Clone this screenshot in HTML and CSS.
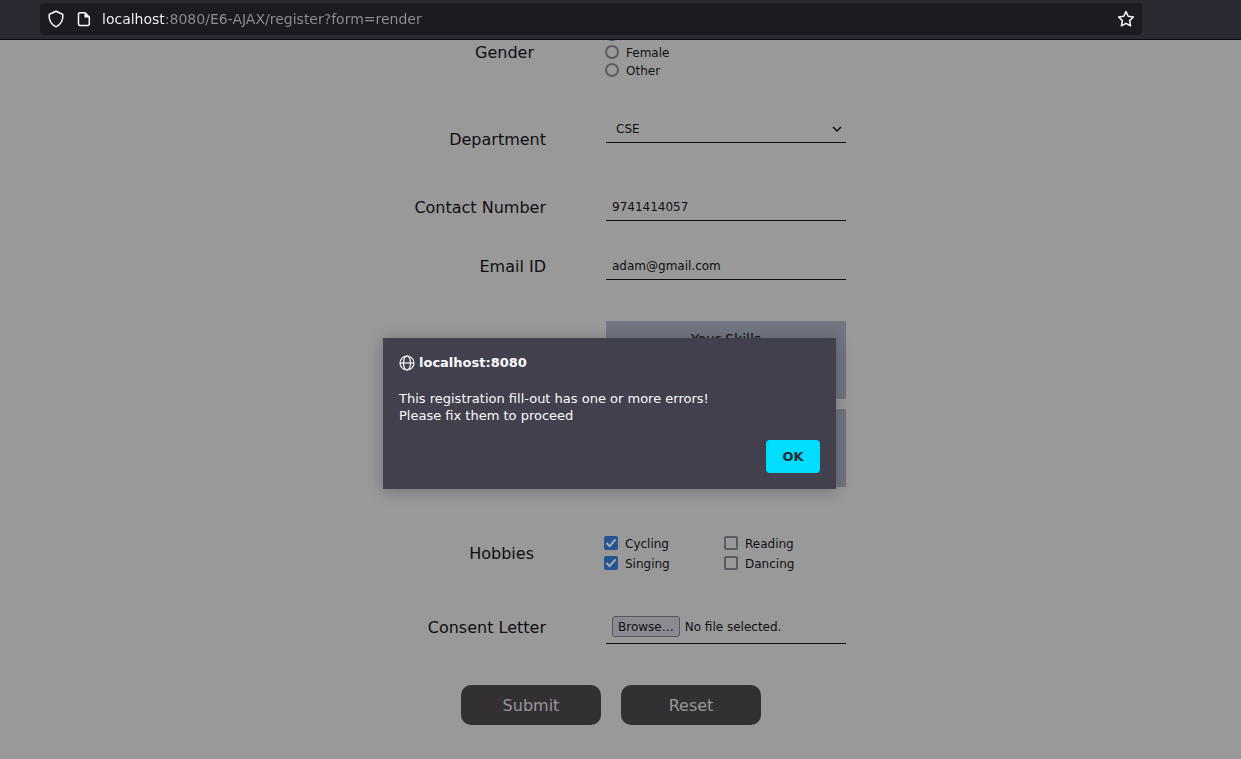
FILE: index.html
```html
<!DOCTYPE html>
<html lang="en">
<head>
<meta charset="utf-8">
<title>Register</title>
<link rel="stylesheet" href="styles.css">
</head>
<body>
<header class="toolbar">
  <div class="address-bar">
    <button class="icon-button" type="button" aria-label="Tracking protection">
      <svg width="16" height="18" viewBox="0 0 16 18"><path d="M8 1.2 14 4c.6.3.9.7.9 1.300 0 5-2 9-6.100 11.100a1.600 1.600 0 0 1-1.600 0C3.100 14.300 1.100 10.300 1.100 5.300c0-.6.300-1 .9-1.300z" fill="none" stroke="currentColor" stroke-width="1.500" stroke-linejoin="round"/></svg>
    </button>
    <button class="icon-button" type="button" aria-label="Site information">
      <svg width="14" height="16" viewBox="0 0 14 16"><path d="M3 1.700h5L12.300 6v7a1.500 1.500 0 0 1-1.500 1.500H3A1.500 1.500 0 0 1 1.500 13V3.200A1.500 1.500 0 0 1 3 1.700z" fill="none" stroke="currentColor" stroke-width="1.500" stroke-linejoin="round"/><path d="M7.500 1v5.500H13z" fill="currentColor"/></svg>
    </button>
    <input class="address" type="text" aria-label="Address" value="localhost:8080/E6-AJAX/register?form=render">
    <button class="icon-button" type="button" aria-label="Bookmark this page">
      <svg width="18" height="18" viewBox="0 0 18 18"><path d="M9 1.600 11.200 6.300 16.400 7 12.600 10.600 13.600 15.800 9 13.300 4.400 15.800 5.400 10.600 1.600 7 6.800 6.300z" fill="none" stroke="currentColor" stroke-width="1.500" stroke-linejoin="round"/></svg>
    </button>
  </div>
</header>
<main class="page">
  <form class="form">
    <div class="row row-gender" role="radiogroup" aria-labelledby="gender-label">
      <span class="label label-group" id="gender-label">Gender</span>
      <div class="choices">
        <input class="radio" type="radio" name="gender" aria-label="Male" checked>
        <label class="choice"><input class="radio" type="radio" name="gender"><span class="choice-text">Female</span></label>
        <label class="choice"><input class="radio" type="radio" name="gender"><span class="choice-text">Other</span></label>
      </div>
    </div>
    <div class="row row-department">
      <label class="label" for="department">Department</label>
      <div class="select-wrap">
        <select class="field select" id="department"><option>CSE</option></select>
        <svg class="chevron" width="10" height="7" viewBox="0 0 10 7"><path d="M1 1l4 4 4-4" fill="none" stroke="currentColor" stroke-width="1.500"/></svg>
      </div>
    </div>
    <div class="row row-contact">
      <label class="label" for="contact">Contact Number</label>
      <input class="field" id="contact" type="tel" value="9741414057">
    </div>
    <div class="row row-email">
      <label class="label" for="email">Email ID</label>
      <input class="field" id="email" type="email" value="adam@gmail.com">
    </div>
    <div class="row row-skills">
      <div class="skills">
        <div class="skill-box">Your Skills</div>
        <div class="skill-box"></div>
      </div>
    </div>
    <div class="row row-hobbies" role="group" aria-labelledby="hobbies-label">
      <span class="label label-group" id="hobbies-label">Hobbies</span>
      <div class="choices choices-grid">
        <label class="choice"><input class="check" type="checkbox" checked><span class="choice-text">Cycling</span></label>
        <label class="choice"><input class="check" type="checkbox"><span class="choice-text">Reading</span></label>
        <label class="choice"><input class="check" type="checkbox" checked><span class="choice-text">Singing</span></label>
        <label class="choice"><input class="check" type="checkbox"><span class="choice-text">Dancing</span></label>
      </div>
    </div>
    <div class="row row-letter">
      <label class="label" for="letter">Consent Letter</label>
      <div class="field file-field">
        <span class="browse">Browse…</span>
        <span>No file selected.</span>
        <input class="file-input" id="letter" type="file">
      </div>
    </div>
    <div class="actions">
      <button class="action" type="submit">Submit</button>
      <button class="action" type="reset">Reset</button>
    </div>
  </form>
  <dialog class="alert" open aria-labelledby="alert-title">
    <h1 class="alert-title" id="alert-title">
      <svg width="16" height="16" viewBox="0 0 16 16" fill="none" stroke="currentColor" stroke-width="1.200"><circle cx="8" cy="8" r="7"/><ellipse cx="8" cy="8" rx="3.500" ry="7"/><path d="M1 8h14"/></svg>
      localhost:8080
    </h1>
    <p class="alert-text">This registration fill-out has one or more errors!<br>Please fix them to proceed</p>
    <button class="ok" type="button">OK</button>
  </dialog>
</main>
</body>
</html>
```
FILE: styles.css
```css
* { box-sizing: border-box; }

body {
  margin: 0;
  min-height: 100vh;
  display: flex;
  flex-direction: column;
  background: #99999a;
  color: #0f0f11;
  font-family: "DejaVu Sans", sans-serif;
  font-size: 12px;
}

button, input, select { font: inherit; }

/* Browser toolbar */
.toolbar {
  position: relative;
  z-index: 1;
  padding: 3px 99px 4px 40px;
  background: #2b2a33;
  border-bottom: 1px solid #0c0c0d;
}

.address-bar {
  display: flex;
  align-items: center;
  height: 32px;
  padding: 0 2px;
  border-radius: 4px;
  background: #1c1b22;
}

.icon-button {
  display: grid;
  place-items: center;
  width: 28px;
  height: 28px;
  padding: 0;
  border: 0;
  background: none;
  color: #fbfbfe;
}

.address {
  flex: 1;
  min-width: 0;
  height: 24px;
  padding: 0;
  margin-left: 4px;
  border: 0;
  outline: 0;
  font-size: 14px;
  background: linear-gradient(90deg, #fbfbfe 63px, #8f8f96 63px);
  -webkit-background-clip: text;
  background-clip: text;
  -webkit-text-fill-color: transparent;
}

/* Registration form */
.page {
  position: relative;
  flex: 1;
  padding-right: 19px;
}

.form {
  max-width: 470px;
  margin: -15px auto 0;
  padding-bottom: 34px;
}

.row {
  display: grid;
  grid-template-columns: 1fr 240px;
  column-gap: 60px;
  align-items: center;
}

.row-gender { margin-bottom: 36px; }
.row-department { margin-bottom: 42px; align-items: end; }
.row-contact { margin-bottom: 31px; }
.row-email { margin-bottom: 41px; }
.row-skills { margin-bottom: 46px; }
.row-hobbies { margin-bottom: 37px; }
.row-letter { margin-bottom: 41px; }

.label {
  padding-top: 2px;
  font-size: 16px;
  line-height: 22px;
  text-align: right;
}

.label-group { padding-right: 12px; }

.field {
  display: block;
  width: 100%;
  height: 28px;
  padding: 0 6px;
  border: 0;
  border-bottom: 1px solid #0c0c0d;
  border-radius: 0;
  outline: 0;
  background: transparent;
  color: inherit;
}

.select-wrap {
  display: flex;
  align-items: center;
  padding-bottom: 8px;
}

.select { appearance: none; padding: 0 10px; }

.chevron {
  margin-left: -14px;
  pointer-events: none;
}

.choices {
  display: grid;
  grid-auto-rows: 18px;
  align-items: center;
  margin-left: -2px;
}

.choices-grid {
  grid-template-columns: 120px 120px;
  grid-auto-rows: 20px;
}

.choice {
  display: flex;
  align-items: center;
  gap: 7px;
}

.choice-text {
  padding-top: 2px;
  line-height: 14px;
}

.radio, .check {
  appearance: none;
  flex: none;
  width: 14px;
  height: 14px;
  margin: 0;
  border: 2px solid #5b5b62;
  border-radius: 2px;
}

.radio { margin-left: 1px; border-radius: 50%; }
.radio:checked { border-color: #345779; }

.check:checked {
  border: 0;
  background: #275493 url("data:image/svg+xml,%3Csvg xmlns='http://www.w3.org/2000/svg' viewBox='0 0 14 14'%3E%3Cpath d='M3 7.500l2.700 2.700L11 4' fill='none' stroke='%23a8abb2' stroke-width='2' stroke-linecap='round' stroke-linejoin='round'/%3E%3C/svg%3E");
}

.skills {
  grid-column: 2;
  display: grid;
  gap: 10px;
}

.skill-box {
  height: 78px;
  padding-top: 9px;
  background: #727680;
  font-size: 14px;
  line-height: 18px;
  text-align: center;
}

.file-field {
  position: relative;
  display: flex;
  align-items: center;
  gap: 5px;
  height: 34px;
}

.browse {
  height: 21px;
  padding: 0 5px;
  border: 1px solid #55555c;
  border-radius: 3px;
  background: #8c8b91;
  line-height: 20px;
}

.file-input {
  position: absolute;
  inset: 0;
  width: 100%;
  opacity: 0;
}

.actions {
  display: flex;
  justify-content: center;
  gap: 20px;
}

.action {
  width: 140px;
  height: 40px;
  border: 0;
  border-radius: 10px;
  background: #333033;
  color: #98989a;
  font-size: 16px;
}

/* Alert shown over the form */
.alert {
  position: absolute;
  top: 298px;
  left: 0;
  right: 22px;
  display: flex;
  flex-direction: column;
  width: 453px;
  margin: 0 auto;
  padding: 16px;
  border: 0;
  background: #42404d;
  color: #fbfbfe;
  font-size: 13px;
  box-shadow: 0 2px 14px rgba(20, 20, 26, 0.3);
}

.alert-title {
  display: flex;
  align-items: center;
  gap: 4px;
  margin: 0 0 19px;
  font-size: 13px;
  line-height: 17px;
}

.alert-text {
  margin: 0 0 16px;
  line-height: 17px;
}

.ok {
  align-self: flex-end;
  width: 54px;
  height: 33px;
  border: 0;
  border-radius: 4px;
  background: #00ddff;
  color: #2b2a33;
  font-weight: bold;
}
```
